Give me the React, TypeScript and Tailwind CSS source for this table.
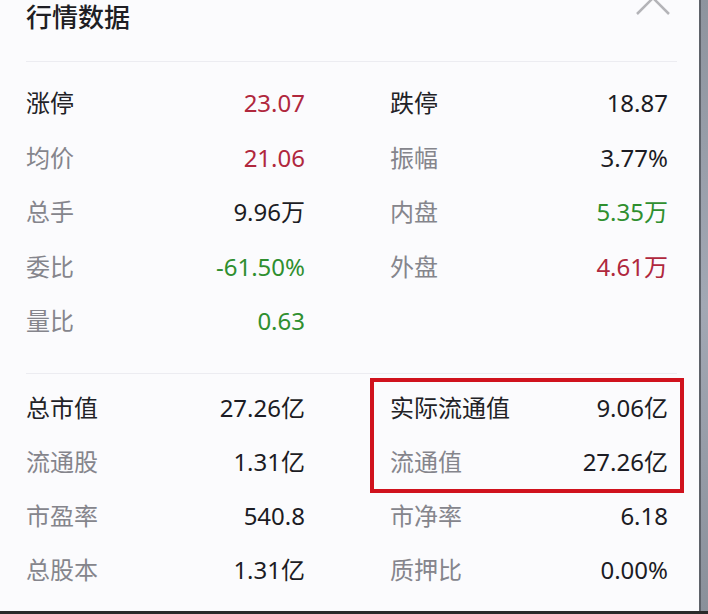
import React from "react";

type Cell = { label: string; value: string; strong?: boolean; color?: string };

const RED = "text-[#b0283d]";
const GREEN = "text-[#2f8f2f]";
const DARK = "text-[#1c1c24]";

const topLeft: Cell[] = [
  { label: "涨停", value: "23.07", strong: true, color: RED },
  { label: "均价", value: "21.06", color: RED },
  { label: "总手", value: "9.96万", color: DARK },
  { label: "委比", value: "-61.50%", color: GREEN },
  { label: "量比", value: "0.63", color: GREEN },
];
const topRight: Cell[] = [
  { label: "跌停", value: "18.87", strong: true, color: DARK },
  { label: "振幅", value: "3.77%", color: DARK },
  { label: "内盘", value: "5.35万", color: GREEN },
  { label: "外盘", value: "4.61万", color: RED },
];
const botLeft: Cell[] = [
  { label: "总市值", value: "27.26亿", strong: true, color: DARK },
  { label: "流通股", value: "1.31亿", color: DARK },
  { label: "市盈率", value: "540.8", color: DARK },
  { label: "总股本", value: "1.31亿", color: DARK },
];
const botRightBoxed: Cell[] = [
  { label: "实际流通值", value: "9.06亿", strong: true, color: DARK },
  { label: "流通值", value: "27.26亿", color: DARK },
];
const botRightRest: Cell[] = [
  { label: "市净率", value: "6.18", color: DARK },
  { label: "质押比", value: "0.00%", color: DARK },
];

function Row({ c, h }: { c: Cell; h: string }) {
  return (
    <div className={`flex items-center justify-between ${h}`}>
      <span
        className={`text-[24px] leading-none ${
          c.strong ? "text-[#222226]" : "text-[#85858c]"
        }`}
      >
        {c.label}
      </span>
      <span className={`text-[24px] leading-none ${c.color}`}>{c.value}</span>
    </div>
  );
}

export default function App() {
  return (
    <div className="w-[708px] h-[614px] flex flex-col bg-[#2a2a2a] font-['Noto_Sans','Noto_Sans_CJK_SC',sans-serif] overflow-hidden">
      <div className="flex h-[611px]">
        <div className="w-[699px] h-full bg-[#fbfbfd] pl-[26px] pr-[22px] overflow-hidden">
          {/* title */}
          <div className="h-[62px] flex justify-between items-start border-b border-[#ececf1]">
            <span className="text-[26px] leading-[34px] text-[#1e1e24] font-medium">
              行情数据
            </span>
            <svg
              width="36"
              height="20"
              viewBox="0 0 36 20"
              className="mr-[6px] -mt-[5px]"
            >
              <polyline
                points="2,19 18,3 34,19"
                fill="none"
                stroke="#b4b4b8"
                strokeWidth="2.5"
              />
            </svg>
          </div>
          {/* top section */}
          <div className="pt-[14px] pb-[24px] border-b border-[#ececf1] flex gap-x-[85px]">
            <div className="w-[279px] flex flex-col">
              {topLeft.map((c) => (
                <Row key={c.label} c={c} h="h-[54.5px]" />
              ))}
            </div>
            <div className="w-[278px] flex flex-col">
              {topRight.map((c) => (
                <Row key={c.label} c={c} h="h-[54.5px]" />
              ))}
            </div>
          </div>
          {/* bottom section */}
          <div className="pt-[7px] flex gap-x-[85px]">
            <div className="w-[279px] flex flex-col">
              {botLeft.map((c) => (
                <Row key={c.label} c={c} h="h-[54px]" />
              ))}
            </div>
            <div className="w-[278px] flex flex-col">
              <div className="relative flex flex-col">
                {botRightBoxed.map((c) => (
                  <Row key={c.label} c={c} h="h-[54px]" />
                ))}
                <div className="absolute -left-[20px] -right-[16px] -top-[3px] -bottom-[4px] border-[4px] border-[#d0121d]" />
              </div>
              {botRightRest.map((c) => (
                <Row key={c.label} c={c} h="h-[54px]" />
              ))}
            </div>
          </div>
        </div>
        <div className="w-[9px] h-full border-l-2 border-[#5e626a] bg-gradient-to-b from-[#8e949e] via-[#a2a8b4] to-[#8a909a]" />
      </div>
      <div className="h-[3px] bg-[#2a2a2a]" />
    </div>
  );
}
